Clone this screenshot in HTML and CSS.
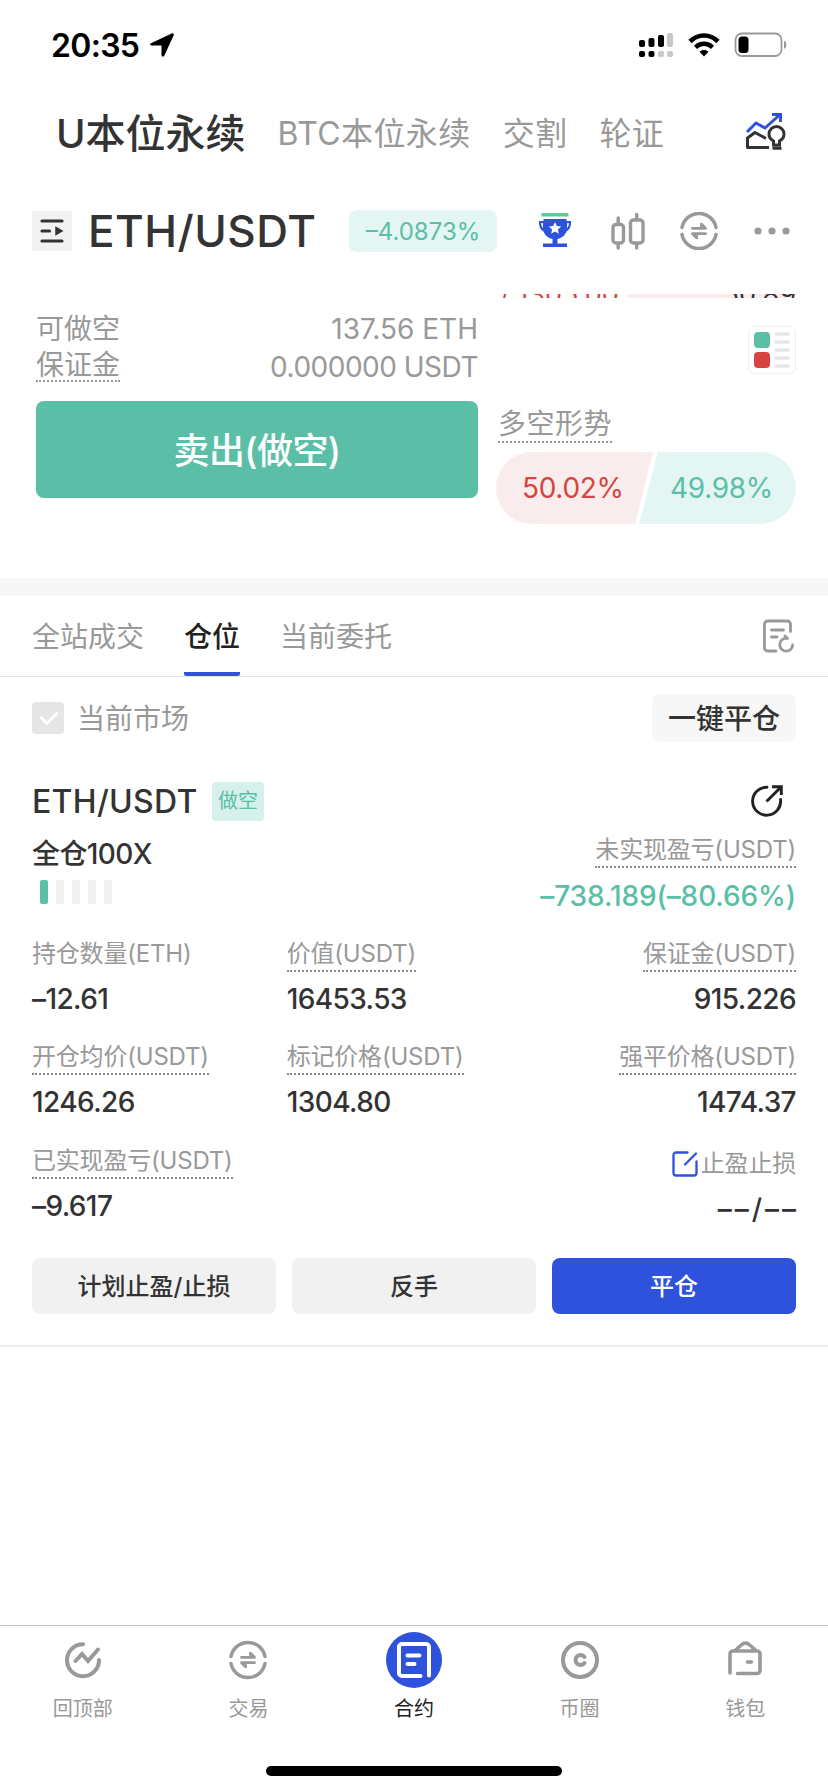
FILE: index.html
```html
<!DOCTYPE html>
<html lang="zh-CN">
<head>
  <meta charset="UTF-8">
  <title>ETH/USDT 永续合约</title>
  <link rel="stylesheet" href="styles.css">
</head>
<body>
  <div class="status-bar">
    <span class="time">20:35</span>
    <svg class="location" width="26" height="26" viewBox="0 0 26 26"><path d="M2 11.2 22.6 1.4c1.5-.6 2.6.4 2 2L15.4 23.6c-.8 1.600-2.900 1.300-2.900-.6V13.400H2.800C.9 13.400.4 12 2 11.200z" fill="#000"/></svg>
    <div class="status-icons">
      <svg width="36" height="26" viewBox="0 0 36 26">
        <g fill="#000">
          <rect x="1" y="8" width="6" height="7" rx="2"/><rect x="10.500" y="6" width="6" height="9" rx="2"/><rect x="20" y="3" width="6" height="12" rx="2"/>
          <rect x="1" y="19" width="6" height="6" rx="2"/><rect x="10.500" y="19" width="6" height="6" rx="2"/>
        </g>
        <g fill="#c8c8c8"><rect x="29" y="1" width="6" height="14" rx="2"/><rect x="20" y="19" width="6" height="6" rx="2"/><rect x="29" y="19" width="6" height="6" rx="2"/></g>
      </svg>
      <svg width="32" height="24" viewBox="0 0 32 24">
        <path d="M2 8.500C10 .5 22 .5 30 8.500" fill="none" stroke="#000" stroke-width="4.600"/>
        <path d="M7.500 14.300c5-4.800 12-4.800 17 0" fill="none" stroke="#000" stroke-width="4.400"/>
        <path d="M11.500 18.800c2.500-2.500 6.500-2.500 9 0L16 23.600z" fill="#000"/>
      </svg>
      <svg width="54" height="26" viewBox="0 0 54 26">
        <rect x="1.500" y="1.500" width="46" height="22.500" rx="6.500" fill="#fff" stroke="#999" stroke-width="1.800"/>
        <rect x="4.500" y="4.500" width="10" height="16.500" rx="3.500" fill="#000"/>
        <path d="M50 8.800c3.200 1 3.200 7 0 8z" fill="#999"/>
      </svg>
    </div>
  </div>

  <div class="nav">
    <span class="nav-item active">U本位永续</span>
    <span class="nav-item">BTC本位永续</span>
    <span class="nav-item">交割</span>
    <span class="nav-item">轮证</span>
    <svg class="nav-icon" width="42" height="38" viewBox="0 0 42 38" fill="none" stroke="#333" stroke-width="3">
      <path d="M2 20 11 11l9 5L34.500 3M27 2.500h8.500V10" stroke="#2f52dc"/>
      <path d="M24 35.500H2.500V26L10 20.500l11 6" stroke-linejoin="round"/>
      <path d="M28.500 33v-4c-3-1.500-4.500-4-4.500-7a7.500 7.500 0 0 1 15 0c0 3-1.500 5.500-4.500 7v4zM27.500 36.200h9"/>
    </svg>
  </div>

  <div class="pair-bar">
    <span class="menu-icon">
      <svg width="40" height="40" viewBox="0 0 40 40" fill="none" stroke="#333" stroke-width="3.200" stroke-linecap="round">
        <path d="M10 10h20M10 20h7.500M10 30h20"/><path d="M24 16.500v7l6-3.500z" fill="#333" stroke-width="1.500"/>
      </svg>
    </span>
    <span class="pair-name">ETH/USDT</span>
    <span class="change">–4.0873%</span>
    <div class="pair-icons">
      <svg width="34" height="36" viewBox="0 0 34 36">
        <path d="M3.500 0h27v3.500h-27z" fill="#5ccb98"/>
        <path d="M2 9h4v8.500C3 16 2 13.500 2 9zM32 9h-4v8.500C31 16 32 13.500 32 9z" fill="none" stroke="#2f52dc" stroke-width="2.200"/>
        <path d="M5.500 6h23v11c0 4-4 8-9 9v4.500h9.500V34H5v-3.500h9.500V26c-5-1-9-5-9-9z" fill="#2f52dc"/>
        <path d="m17 9 1.800 4 4.400.5-3.300 3 .9 4.300-3.800-2.200-3.800 2.200.9-4.300-3.300-3 4.400-.5z" fill="#fff"/>
      </svg>
      <svg class="candles" width="34" height="37" viewBox="0 0 34 37" fill="none" stroke="#999" stroke-width="3.400">
        <rect x="2" y="11.500" width="10.500" height="18.500" rx="3"/><rect x="19.500" y="7" width="12.500" height="23" rx="3"/>
        <path d="M7.200 5v6M7.200 31v4M25.700 1.500v5M25.700 31v4" stroke-linecap="round"/>
      </svg>
      <svg width="38" height="38" viewBox="0 0 38 38">
        <use href="#swap"/>
      </svg>
      <svg width="36" height="8" viewBox="0 0 36 8" fill="#999"><circle cx="4" cy="4" r="3.600"/><circle cx="18" cy="4" r="3.600"/><circle cx="32" cy="4" r="3.600"/></svg>
    </div>
  </div>

  <div class="trade">
    <div class="order-form">
      <div class="info-row"><span>可做空</span><span>137.56 ETH</span></div>
      <div class="info-row margin"><span class="dotted">保证金</span><span>0.000000 USDT</span></div>
      <button class="sell">卖出(做空)</button>
    </div>
    <div class="book">
      <!-- last ask row, mostly scrolled under the header -->
      <div class="book-row"><span class="price">/ 1305.00</span><span class="amount">50.89</span></div>
      <svg class="depth-icon" width="48" height="48" viewBox="0 0 48 48">
        <rect x=".5" y=".5" width="47" height="47" rx="6" fill="#fff" stroke="#eee"/>
        <rect x="6" y="6" width="16" height="16" rx="4" fill="#5abfa6"/>
        <rect x="6" y="26" width="16" height="16" rx="4" fill="#d5453f"/>
        <path d="M28 8h12M28 16h12M28 24h12M28 32h12M28 40h12" stroke="#e8e8e8" stroke-width="3.600" stroke-linecap="round"/>
      </svg>
      <span class="trend-title dotted">多空形势</span>
      <div class="trend">
        <span class="long">50.02%</span>
        <span class="short">49.98%</span>
      </div>
    </div>
  </div>

  <div class="tabs">
    <span class="tab">全站成交</span>
    <span class="tab active">仓位</span>
    <span class="tab">当前委托</span>
    <svg class="history-icon" width="32" height="34" viewBox="0 0 32 34" fill="none" stroke="#999" stroke-width="2.800" stroke-linecap="round" stroke-linejoin="round">
      <path d="M28.500 12.500V5a3 3 0 0 0-3-3h-20a3 3 0 0 0-3 3v24a3 3 0 0 0 3 3H14M9.500 11h12M9.500 18h5.500"/>
      <path d="M25 19.500c-4-.8-7.200 2-7.200 6a6.300 6.300 0 0 0 12.800.5M23 17l2.500 2.500"/>
    </svg>
  </div>

  <div class="filter">
    <span class="checkbox"><svg width="32" height="32" viewBox="0 0 32 32"><path d="m8.500 15 6.500 6.500L25.500 10.500" fill="none" stroke="#fff" stroke-width="2.800"/></svg></span>
    <span class="filter-label">当前市场</span>
    <button class="close-all">一键平仓</button>
  </div>

  <div class="position">
    <div class="position-head">
      <span class="symbol">ETH/USDT</span>
      <span class="side">做空</span>
      <svg class="share" width="34" height="34" viewBox="0 0 34 34" fill="none" stroke="#222" stroke-width="2.900">
        <path d="M17 3.200A14 14 0 1 0 30.500 15.500" stroke-linecap="round"/><path d="M16.500 17.500 31 3M22 2.700h9.300V11"/>
      </svg>
    </div>
    <div class="position-sub">
      <div>
        <div class="leverage">全仓100X</div>
        <div class="risk"><i class="on"></i><i></i><i></i><i></i><i></i></div>
      </div>
      <div class="pnl">
        <span class="label dotted">未实现盈亏(USDT)</span>
        <span class="pnl-value">–738.189(–80.66%)</span>
      </div>
    </div>
    <div class="stats">
      <div class="stat"><span class="label">持仓数量(ETH)</span><span class="value">–12.61</span></div>
      <div class="stat"><span class="label dotted">价值(USDT)</span><span class="value">16453.53</span></div>
      <div class="stat right"><span class="label dotted">保证金(USDT)</span><span class="value">915.226</span></div>
      <div class="stat"><span class="label dotted">开仓均价(USDT)</span><span class="value">1246.26</span></div>
      <div class="stat"><span class="label dotted">标记价格(USDT)</span><span class="value">1304.80</span></div>
      <div class="stat right"><span class="label dotted">强平价格(USDT)</span><span class="value">1474.37</span></div>
      <div class="stat"><span class="label dotted">已实现盈亏(USDT)</span><span class="value">–9.617</span></div>
      <div class="stat"></div>
      <div class="stat right tpsl">
        <span class="label">
          <svg width="26" height="26" viewBox="0 0 26 26" fill="none" stroke="#2f52dc" stroke-width="2.300" stroke-linecap="round"><path d="M15.500 1.500H4a2.500 2.500 0 0 0-2.500 2.500v18A2.500 2.500 0 0 0 4 24.500h18a2.500 2.500 0 0 0 2.500-2.500V10.500M13 13.500 24 2.500"/></svg>止盈止损
        </span>
        <span class="value">––/––</span>
      </div>
    </div>
    <div class="actions">
      <button>计划止盈/止损</button>
      <button>反手</button>
      <button class="primary">平仓</button>
    </div>
  </div>

  <div class="tab-bar">
    <div class="tab-item">
      <svg width="56" height="56" viewBox="0 0 56 56" fill="none" stroke="#999" stroke-width="4" stroke-linecap="round"><path d="M28 12.200A16 16 0 1 0 44 28"/><path d="m20.500 29 6.500-7 6 7L43 17.500"/></svg>
      <span>回顶部</span>
    </div>
    <div class="tab-item">
      <svg width="56" height="56" viewBox="-9 -9 56 56">
        <g id="swap" fill="none" stroke="#999" stroke-width="3.500" stroke-linecap="round" stroke-linejoin="round">
          <path d="M2 15.500a17.300 17.300 0 0 1 34 0M2 22.500a17.300 17.300 0 0 0 34 0"/>
          <path d="M12.500 16.300h13l-4-4M25.500 21.700h-13l4 4" stroke-width="2.800"/>
          <path d="m21 11.500 4.500 4.500H21zM17 26.500 12.500 22H17z" fill="#999" stroke-width="1"/>
        </g>
      </svg>
      <span>交易</span>
    </div>
    <div class="tab-item active">
      <svg width="56" height="56" viewBox="0 0 56 56" fill="none" stroke="#fff" stroke-width="4" stroke-linecap="round" stroke-linejoin="round">
        <circle cx="28" cy="28" r="28" fill="#2f52dc" stroke="none"/>
        <path d="M43 43.500V15a3 3 0 0 0-3-3H16a3 3 0 0 0-3 3v26a3 3 0 0 0 3 3h18.500M21.500 23.500h12M21.500 32h7"/>
      </svg>
      <span>合约</span>
    </div>
    <div class="tab-item">
      <svg width="56" height="56" viewBox="0 0 56 56" fill="none" stroke="#999" stroke-width="4" stroke-linecap="round"><circle cx="28" cy="28" r="17"/><path d="M32.500 25a5 5 0 1 0 0 6"/></svg>
      <span>币圈</span>
    </div>
    <div class="tab-item">
      <svg width="56" height="56" viewBox="0 0 56 56" fill="none" stroke="#999" stroke-width="3.600" stroke-linecap="round" stroke-linejoin="round"><path d="M13 41V22a3 3 0 0 1 3-3h24a3 3 0 0 1 3 3v16.500a3 3 0 0 1-3 3H20.500M18.500 18l7-6q3-2 6 0l7 6M30.500 30h4"/></svg>
      <span>钱包</span>
    </div>
  </div>
  <div class="home-indicator"></div>
</body>
</html>
```
FILE: styles.css
```css
* {
  box-sizing: border-box;
}
body {
  margin: 0;
  width: 828px;
  height: 1792px;
  display: flex;
  flex-direction: column;
  overflow: hidden;
  background-color: #fff;
  color: #333;
  font-family: Inter, 'Noto Sans CJK SC', sans-serif;
  font-size: 28px;
}
svg {
  display: block;
  flex-shrink: 0;
}
button {
  border: none;
  padding: 0;
  font-family: inherit;
  color: inherit;
}
.dotted {
  border-bottom: 2px dotted #999;
}

/* Status bar */
.status-bar {
  height: 88px;
  padding: 2px 40px 0 51px;
  display: flex;
  align-items: center;
  color: #000;
}
.time {
  font-size: 32px;
  font-weight: 600;
  letter-spacing: -0.7px;
  width: 98px;
}
.status-icons {
  margin-left: auto;
  display: flex;
  align-items: center;
  gap: 14px;
}

/* Market nav */
.nav {
  height: 90px;
  padding: 0 41px 4px 56px;
  display: flex;
  align-items: center;
}
.nav-item {
  font-size: 32px;
  letter-spacing: 0.4px;
  color: #999;
  margin-right: 32px;
  white-space: nowrap;
}
.nav-item.active {
  font-size: 40px;
  font-weight: 500;
  letter-spacing: 0;
  color: #333;
}
.nav-icon {
  margin-left: auto;
}

/* Pair header */
.pair-bar {
  height: 116px;
  padding: 0 38px 10px 32px;
  display: flex;
  align-items: center;
}
.menu-icon {
  background-color: #f2f2f2;
}
.pair-name {
  width: 261px;
  margin-left: 16px;
  font-size: 44px;
  font-weight: 500;
  letter-spacing: 0.5px;
}
.change {
  width: 148px;
  height: 42px;
  border-radius: 8px;
  background-color: #e4f6f4;
  color: #5abfa6;
  font-size: 24px;
  line-height: 43px;
  text-align: center;
}
.pair-icons {
  flex: 1;
  margin-left: 41px;
  display: flex;
  align-items: center;
  justify-content: space-between;
}
.candles {
  margin-left: 3px;
}

/* Order form and book */
.trade {
  height: 302px;
  border-bottom: 18px solid #f7f7f7;
  padding: 0 32px 0 36px;
  display: flex;
  gap: 18px;
}
.order-form {
  width: 442px;
  padding-top: 16px;
}
.info-row {
  height: 38px;
  line-height: 39px;
  display: flex;
  justify-content: space-between;
  align-items: flex-start;
  color: #999;
}
.margin {
  letter-spacing: -0.5px;
}
.info-row .dotted {
  height: 34px;
  line-height: 35px;
  letter-spacing: 0;
}
.sell {
  width: 442px;
  height: 97px;
  margin-top: 15px;
  padding-bottom: 4px;
  border-radius: 8px;
  background-color: #5abfa6;
  color: #fff;
  font-size: 36px;
  font-weight: 500;
  letter-spacing: -0.6px;
}
.book {
  flex: 1;
  display: flex;
  flex-direction: column;
  align-items: flex-start;
}
.book-row {
  width: 100%;
  height: 4px;
  display: flex;
  justify-content: space-between;
  overflow: hidden;
  line-height: 1px;
  font-size: 27px;
  background-image: linear-gradient(to right, #fff 44%, #fbeceb 44%);
}
.price {
  padding-left: 4px;
  color: #d5453f;
}
.depth-icon {
  margin: 28px 0 0 auto;
}
.trend-title {
  height: 38px;
  margin: 31px 0 0 2px;
  line-height: 39px;
  letter-spacing: 0.5px;
  color: #999;
}
.trend {
  width: 300px;
  height: 72px;
  margin-top: 9px;
  border-radius: 36px;
  overflow: hidden;
  display: flex;
  line-height: 72px;
  letter-spacing: -0.3px;
}
.long {
  width: 157px;
  padding-left: 26px;
  background-color: #f9ecec;
  color: #d5453f;
  clip-path: polygon(0 0, 100% 0, 139px 100%, 0 100%);
}
.short {
  flex: 1;
  margin-left: -14px;
  padding-left: 31px;
  background-color: #e4f6f4;
  color: #5abfa6;
  clip-path: polygon(19px 0, 100% 0, 100% 100%, 0 100%);
}

/* Tabs */
.tabs {
  height: 81px;
  padding: 0 34px 0 32px;
  border-bottom: 1px solid #e5e5e5;
  display: flex;
  gap: 40px;
}
.tab {
  line-height: 82px;
  color: #999;
}
.tab.active {
  height: 80px;
  background: linear-gradient(#2f52dc, #2f52dc) bottom / 100% 4px no-repeat;
  border-radius: 2px;
  color: #222;
  font-weight: 500;
}
.history-icon {
  margin: 23px 0 0 auto;
}
.filter {
  height: 82px;
  padding: 0 32px;
  display: flex;
  align-items: center;
}
.checkbox {
  background-color: #e6e6e6;
  border-radius: 4px;
}
.filter-label {
  margin: -2px 0 0 13px;
  color: #999;
}
.close-all {
  margin-left: auto;
  width: 144px;
  height: 48px;
  padding-bottom: 2px;
  border-radius: 8px;
  background-color: #f7f7f7;
  font-size: 28px;
  font-weight: 500;
}

/* Position card */
.position {
  height: 588px;
  padding: 20px 32px 0;
  border-bottom: 2px solid #eee;
}
.position-head {
  height: 44px;
  display: flex;
  align-items: center;
}
.symbol {
  width: 180px;
  font-size: 32px;
  font-weight: 500;
  letter-spacing: 0.3px;
}
.side {
  width: 52px;
  height: 39px;
  border-radius: 4px;
  background-color: #d6f0ec;
  color: #5abfa6;
  font-size: 20px;
  line-height: 39px;
  text-align: center;
}
.share {
  margin-left: auto;
  margin-right: 12px;
}
.position-sub {
  height: 110px;
  display: flex;
  justify-content: space-between;
}
.leverage {
  margin-top: 11px;
  line-height: 40px;
  font-weight: 500;
  letter-spacing: -0.6px;
}
.risk {
  display: flex;
  gap: 8px;
  padding: 6px 8px;
}
.risk i {
  width: 8px;
  height: 24px;
  border-radius: 2px;
  background-color: #f1f1f1;
}
.risk .on {
  background-color: #5abfa6;
}
.label {
  height: 35px;
  line-height: 34px;
  font-size: 24px;
  letter-spacing: -0.2px;
  color: #999;
  white-space: nowrap;
}
.label.dotted {
  border-color: #888;
}
.pnl {
  margin-top: 10px;
  display: flex;
  flex-direction: column;
  align-items: flex-end;
}
.pnl-value {
  margin-top: 8px;
  line-height: 40px;
  color: #5abfa6;
  font-weight: 500;
  letter-spacing: -0.1px;
}
.stats {
  display: grid;
  grid-template-columns: 254.7px 254.7px 1fr;
  grid-auto-rows: 103.3px;
}
.stat {
  padding-top: 4px;
  display: flex;
  flex-direction: column;
  align-items: flex-start;
}
.stat.right {
  align-items: flex-end;
}
.value {
  margin-top: 7px;
  line-height: 40px;
  font-weight: 500;
  letter-spacing: -0.6px;
}
.tpsl {
  padding-top: 7px;
}
.tpsl .label {
  display: flex;
  align-items: center;
  gap: 3px;
}
.tpsl .value {
  margin-right: -3px;
  letter-spacing: 3px;
}
.actions {
  margin-top: 15px;
  display: flex;
  gap: 16px;
}
.actions button {
  flex: 1;
  height: 56px;
  padding-bottom: 2px;
  border-radius: 8px;
  background-color: #f1f1f1;
  font-size: 24px;
  font-weight: 500;
}
.actions .primary {
  background-color: #2f52dc;
  color: #fff;
}

/* Bottom tab bar */
.tab-bar {
  margin-top: auto;
  height: 141px;
  padding-top: 6px;
  border-top: 1px solid #c4c4c4;
  display: flex;
}
.tab-item {
  flex: 1;
  display: flex;
  flex-direction: column;
  align-items: center;
  font-size: 20px;
  color: #999;
}
.tab-item span {
  margin-top: 6px;
  line-height: 30px;
}
.tab-item.active {
  color: #222;
}
.home-indicator {
  width: 296px;
  height: 10px;
  margin: 0 auto 16px;
  border-radius: 5px;
  background-color: #000;
}
```
